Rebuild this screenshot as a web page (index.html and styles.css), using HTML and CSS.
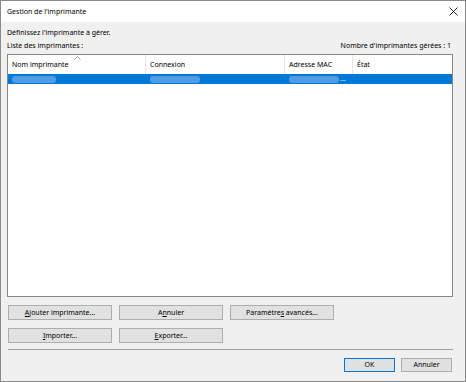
FILE: index.html
```html
<!DOCTYPE html>
<html lang="fr">
<head>
  <meta charset="UTF-8">
  <title>Gestion de l'imprimante</title>
  <link rel="stylesheet" href="styles.css">
</head>
<body>
  <div class="window">
    <!-- Barre de titre -->
    <div class="titlebar">
      <span class="title">Gestion de l'imprimante</span>
      <svg class="close" width="9" height="9" viewBox="0 0 9 9">
        <path d="M0.5 0.5 L8.5 8.5 M8.5 0.5 L0.5 8.5" stroke="#111" stroke-width="0.9" fill="none"/>
      </svg>
    </div>

    <div class="content">
      <p class="intro">Définissez l'imprimante à gérer.</p>
      <div class="list-head">
        <span>Liste des imprimantes :</span>
        <span>Nombre d'imprimantes gérées : 1</span>
      </div>

      <!-- Liste des imprimantes -->
      <div class="listview">
        <div class="lv-header">
          <div class="col col-name">
            Nom imprimante
            <svg class="sort" width="7" height="4" viewBox="0 0 7 4">
              <path d="M0.5 3.5 L3.5 0.5 L6.5 3.5" stroke="#9a9a9a" stroke-width="0.9" fill="none"/>
            </svg>
          </div>
          <div class="col col-conn">Connexion</div>
          <div class="col col-mac">Adresse MAC</div>
          <div class="col col-state">État</div>
        </div>
        <div class="lv-row selected">
          <div class="col col-name"><span class="blur b1"></span></div>
          <div class="col col-conn"><span class="blur b2"></span></div>
          <div class="col col-mac"><span class="blur b3"></span><span class="dots">...</span></div>
          <div class="col col-state"></div>
        </div>
      </div>

      <div class="actions">
        <button class="btn"><u>A</u>jouter imprimante...</button>
        <button class="btn">A<u>n</u>nuler</button>
        <button class="btn">Paramètre<u>s</u> avancés...</button>
        <button class="btn"><u>I</u>mporter...</button>
        <button class="btn"><u>E</u>xporter...</button>
      </div>

      <hr class="sep">

      <div class="footer">
        <button class="btn btn-default">OK</button>
        <button class="btn">Annuler</button>
      </div>
    </div>
  </div>
</body>
</html>
```

FILE: styles.css
```css
/* === BASE === */
* {
  margin: 0;
  padding: 0;
  box-sizing: border-box;
}
body {
  font-family: "Segoe UI", "Noto Sans", sans-serif;
  font-size: 7px;
  color: #000;
  background: #f0f0f0;
}

/* === FENÊTRE === */
.window {
  width: 466px;
  height: 382px;
  border: 1px solid #8a8a8a;
  background: #f0f0f0;
  display: flex;
  flex-direction: column;
}
.titlebar {
  height: 21px;
  background: #fff;
  display: flex;
  align-items: center;
  justify-content: space-between;
  padding: 0 7px 0 6px;
}
.title {
  font-size: 7px;
}
.content {
  padding: 6px 12px 0 6px;
  display: flex;
  flex-direction: column;
}
.intro {
  height: 10px;
  line-height: 10px;
}
.list-head {
  display: flex;
  justify-content: space-between;
  height: 10px;
  line-height: 10px;
  margin-top: 3px;
  padding-right: 2px;
}

/* === LISTE === */
.listview {
  margin-top: 3px;
  height: 243px;
  background: #fff;
  border: 1px solid #828790;
}
.lv-header {
  display: flex;
  height: 19px;
  line-height: 19px;
}
.lv-header .col {
  border-right: 1px solid #e5e5e5;
  padding-left: 4px;
  position: relative;
}
.lv-header .col-state {
  border-right: none;
}
.col-name { width: 138px; }
.col-conn { width: 139px; }
.col-mac { width: 68px; }
.col-state { flex: 1; }
.sort {
  position: absolute;
  left: 66px;
  top: 1px;
}
.lv-row {
  display: flex;
  height: 10px;
}
.lv-row.selected {
  background: #0078d7;
}
.lv-row .col {
  display: flex;
  align-items: center;
  padding-left: 4px;
}
.blur {
  display: block;
  height: 7px;
  background: #4e9de2;
  border-radius: 3px;
}
.b1 { width: 44px; }
.b2 { width: 50px; }
.b3 { width: 50px; }
.dots {
  color: #fff;
  font-size: 7px;
  line-height: 10px;
  margin-left: 1px;
}

/* === BOUTONS === */
.actions {
  display: grid;
  grid-template-columns: 104px 104px 104px;
  column-gap: 7px;
  row-gap: 8px;
  margin-top: 8px;
  padding-left: 1px;
}
.btn {
  height: 15px;
  font-family: "Segoe UI", "Noto Sans", sans-serif;
  font-size: 7px;
  line-height: 13px;
  background: #e1e1e1;
  border: 1px solid #adadad;
  color: #000;
}
.sep {
  border: none;
  border-top: 1px solid #a0a0a0;
  margin-top: 6px;
  width: 445px;
  margin-left: 1px;
}
.footer {
  display: flex;
  justify-content: flex-end;
  gap: 6px;
  margin-top: 8px;
  padding-right: 1px;
}
.footer .btn {
  width: 51px;
  height: 14px;
  line-height: 12px;
}
.btn-default {
  border: 1px solid #0078d7;
}
```
